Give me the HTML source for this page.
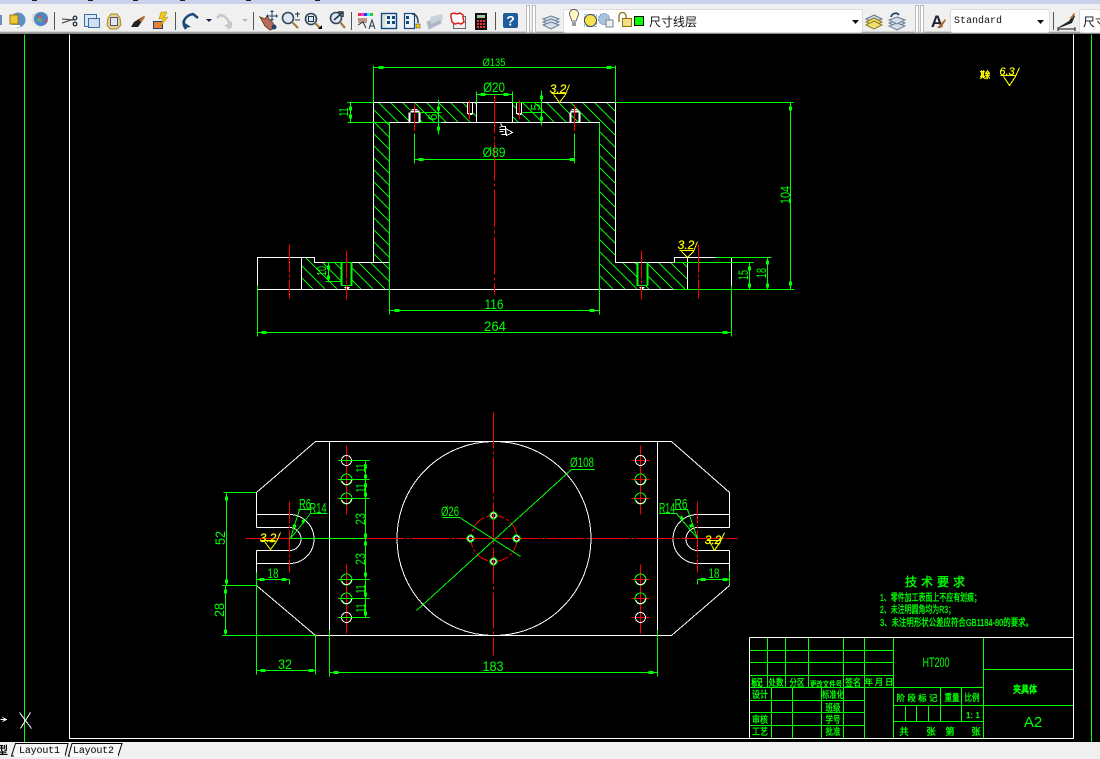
<!DOCTYPE html>
<html><head><meta charset="utf-8"><title>CAD</title>
<style>
html,body{margin:0;padding:0;background:#000;width:1100px;height:759px;overflow:hidden}
svg{display:block}
.t{font-family:"Liberation Sans","Noto Sans CJK SC",sans-serif;fill:#0f0;font-size:14px;text-anchor:middle}
.s{font-size:12.500px}
.c{font-family:"Liberation Sans","Noto Sans CJK SC",sans-serif;fill:#0f0;font-size:9.500px;text-anchor:middle;stroke:#0f0;stroke-width:.35}
.y{font-family:"Liberation Sans",sans-serif;fill:#ff0;font-size:12px;font-style:italic;text-anchor:middle;stroke:#ff0;stroke-width:.2}
</style></head><body>
<svg xmlns="http://www.w3.org/2000/svg" width="1100" height="759" viewBox="0 0 1100 759">
<defs>
<clipPath id="hc"><path d="M373 102H476V122H389V289H301V257H314V262H373Z M615 102H512V122H599V289H687V262H615Z"/></clipPath>
</defs>
<rect width="1100" height="759" fill="#000"/>

<!-- hatching -->
<g clip-path="url(#hc)">
<path shape-rendering="crispEdges" fill="none" stroke="#0e0" d="M114 102l187 187M126 102l187 187M138 102l187 187M150 102l187 187M162 102l187 187M174 102l187 187M186 102l187 187M198 102l187 187M210 102l187 187M222 102l187 187M234 102l187 187M246 102l187 187M258 102l187 187M270 102l187 187M282 102l187 187M294 102l187 187M306 102l187 187M318 102l187 187M330 102l187 187M342 102l187 187M354 102l187 187M366 102l187 187M378 102l187 187M390 102l187 187M402 102l187 187M414 102l187 187M426 102l187 187M438 102l187 187M450 102l187 187M462 102l187 187M474 102l187 187M486 102l187 187M498 102l187 187M510 102l187 187M522 102l187 187M534 102l187 187M546 102l187 187M558 102l187 187M570 102l187 187M582 102l187 187M594 102l187 187M606 102l187 187M618 102l187 187M630 102l187 187M642 102l187 187M654 102l187 187M666 102l187 187M678 102l187 187"/>
</g>
<path fill="#000" d="M409 110h11v12h-11zM342 262h10v23h-10zM637 262h10v23h-10zM467 102h6v12h-6zM516 102h6v12h-6z"/>

<g transform="translate(.5 .5)" shape-rendering="crispEdges" fill="none">
<!-- frame -->
<path stroke="#0f0" d="M24 34V742M1091 34V742"/>
<path stroke="#fff" d="M69 34V738H1073V34"/>

<!-- front section white -->
<path stroke="#fff" d="M373 102H615V262H674V257H715M731 257V285M389 122V262H373V102M389 122H599V262M373 262H314V257H257V289H674M301 257V289M687 257V289M476 102V122M512 102V122"/>
<path stroke="#fff" d="M373 102V262M615 102V262"/>
<!-- hole details -->
<path stroke="#fff" stroke-width="2" d="M409 122V112M419 122V112M410 111H419M570 122V112M579 122V112M570 111H579"/>
<path stroke="#fff" d="M467 102V113H472V102M516 102V113H521V102M468 114h4M517 114h4M411 109h6M571 109h6M343 285h7M344 287h5M345 288h3M638 285h7M639 287h5M640 288h3"/>
<!-- green in front -->
<path stroke="#0f0" d="M373 65V102M615 65V102M373 67H615M476 91V102M512 91V102M476 94H512M414 133V163M574 133V163M414 159H574M347 102H373M347 122H389M350 102V122M615 102H793M438 99V134M419 112H441M419 122H441M541 90V125M512 102H541M522 112H545M389 122V314M599 122V314M389 310H599M257 285V336M731 285V336M257 332H731M328 262V282M325 262H352M325 281H341M341 285H352M636 285H647M674 289H794M674 262H753M715 257H771M749 262V289M767 257V289M790 102V289"/>
<path stroke="#0f0" stroke-width="2" d="M341 262V285M351 262V285M637 262V285M647 262V285"/>
<path stroke="#0f0" stroke-width="3" d="M378 67h5M606 67h5M480 94h5M503 94h5M418 159h5M569 159h5M350 106v4M350 114v4M438 106v4M438 126v4M541 95v4M541 116v4M394 310h5M589 310h5M261 332h5M722 332h5M328 265v4M328 275v4M749 266v4M749 283v4M767 260v4M767 283v4M790 106v4M790 281v4"/>
<!-- red center lines -->
<g stroke="#f00">
<path stroke-dasharray="38 3 3 3" d="M494 95V294"/>
<path d="M414 104V131M574 104V131M469 100V119M519 100V119"/>
<path stroke-dasharray="28 2 3 2" d="M289 244V298M698 244V298M346 250V299M641 250V299"/>
</g>
<!-- cursor -->
<path stroke="#fff" d="M500 123l2 3h3v3h-4M499 129h6v5h-4M505 128l7 4-6 3zM501 126l-2 1M503 131h-4"/>

<!-- plan view white -->
<path stroke="#fff" d="M256 514V492L315 441H671L729 492V527H697M256 514H289M256 527H289M256 550H289M256 563H289M256 514V527M256 550V572M729 550V585M697 514H729M697 550H729M697 563H729M256 585L315 635H671L729 585M329 441V630"/>
<path stroke="#fff" d="M657 441V635M315 635H671"/>
<path stroke="#fff" d="M289 514A24.500 24.500 0 0 1 289 563M289 527A11.500 11.500 0 0 1 289 550M697 514A24.500 24.500 0 0 0 697 563M697 527A11.500 11.500 0 0 0 697 550"/>
<circle cx="493.500" cy="538" r="97" stroke="#fff"/>
<!-- red -->
<circle cx="493.500" cy="538" r="23" stroke="#f00" stroke-dasharray="14 2 3 2"/>
<g stroke="#f00">
<path stroke-dasharray="38 2 3 2" d="M366 538H737"/>
<path d="M245 538H289"/>
<path stroke-dasharray="36 3 3 3" d="M493 412V655"/>
<path stroke-dasharray="22 2 3 2" d="M289 501V572M697 501V572"/>
<path d="M346 445V514M346 564V633M640 445V514M640 564V633M337 460H355M337 479H355M337 498H355M337 579H355M337 598H355M337 617H355M631 460H649M631 479H649M631 498H649M631 579H649M631 598H649M631 617H649"/>
</g>
<!-- holes -->
<g stroke="#0f0">
<circle cx="346" cy="479" r="5.500"/><circle cx="346" cy="498" r="5.500"/><circle cx="346" cy="579" r="5.500"/><circle cx="346" cy="598" r="5.500"/>
<circle cx="640" cy="479" r="5.500"/><circle cx="640" cy="498" r="5.500"/><circle cx="640" cy="579" r="5.500"/><circle cx="640" cy="598" r="5.500"/>
</g>
<g stroke="#fff">
<circle cx="346" cy="460" r="5"/><circle cx="346" cy="617" r="5"/><circle cx="640" cy="460" r="5"/><circle cx="640" cy="617" r="5"/>
<circle cx="346" cy="479" r="5" stroke-dasharray="14 18"/><circle cx="346" cy="498" r="5" stroke-dasharray="14 18"/><circle cx="346" cy="579" r="5" stroke-dasharray="14 18"/><circle cx="346" cy="598" r="5" stroke-dasharray="14 18"/>
<circle cx="640" cy="479" r="5" stroke-dasharray="14 18"/><circle cx="640" cy="498" r="5" stroke-dasharray="14 18"/><circle cx="640" cy="579" r="5" stroke-dasharray="14 18"/><circle cx="640" cy="598" r="5" stroke-dasharray="14 18"/>
</g>
<g stroke="#0f0" fill="#000"><circle cx="493" cy="515" r="3.500"/><circle cx="470" cy="538" r="3.500"/><circle cx="516" cy="538" r="3.500"/><circle cx="493" cy="561" r="3.500"/></g>
<g stroke="#fff" fill="#000"><circle cx="493" cy="515" r="2.500"/><circle cx="470" cy="538" r="2.500"/><circle cx="516" cy="538" r="2.500"/><circle cx="493" cy="561" r="2.500"/></g>
<path stroke="#f00" d="M493 513v5M468 538h5M514 538h5M493 559v5"/>
<!-- plan green -->
<path stroke="#0f0" d="M289 538H366M223 492H256M226 492V585M222 585H256M225 585V635M222 635H315M256 572V674M315 635V674M256 670H315M329 630V676M657 630V676M329 672H657M256 579H289M289 579V584M697 579H729M697 579V584M729 570V584M338 460H369M338 479H369M338 498H369M338 579H369M338 598H369M338 617H369M365 460V617"/>
<path stroke="#0f0" d="M416 610L571 469H594M442 517H459L520 556M298 509H311M290 538L299 509M290 538L310 513H327M697 538L687 509H674M697 538L676 513H659"/>
<path stroke="#0f0" stroke-width="3" d="M226 496v4M226 579v4M225 589v4M225 629v4M260 670h5M308 670h5M333 672h5M648 672h5M259 579h5M281 579h5M700 579h5M722 579h5M365 464v4M365 474v4M365 483v4M365 492v4M365 533v4M365 541v4M365 572v4M365 592v4M365 611v4M293 524l2 3M304 519l-2 3M680 516l2 3M690 524l1 3"/>

<!-- yellow symbols -->
<path stroke="#ff0" d="M551 93H565M553 94L559 102L565 94L569 84M679 250H693M681 251L687 257L693 251L697 241M261 540H275M264 541L270 549L276 541L280 532M706 540H720M709 541L714 550L720 541L724 532M1000 75H1015M1003 76L1009 85L1015 76L1019 67"/>

<!-- title block -->
<path stroke="#0f0" d="M749 650H893M749 662H893M749 675H893M749 687H983M749 700H864M749 712H864M749 725H864M767 637V687M785 637V687M808 637V687M843 637V738M864 637V738M893 637V738M983 637V738M771 687V738M792 687V738M821 687V738M940 687V721M961 687V721M905 705V721M916 705V721M928 705V721M893 705H983M893 721H983M983 669H1073M983 705H1073"/>
<path stroke="#fff" d="M749 637H1073V738M749 637V738"/>
<!-- UCS -->
<path stroke="#fff" d="M19 712L31 728M30 712L20 728M0 719h6M2 717l4 2-4 2"/>
</g>

<!-- dim text -->
<text class="t" x="494" y="66" textLength="23" lengthAdjust="spacingAndGlyphs" style="font-size:11px">Ø135</text>
<text class="t" x="494" y="92" textLength="22" lengthAdjust="spacingAndGlyphs">Ø20</text>
<text class="t" x="494" y="157" textLength="23" lengthAdjust="spacingAndGlyphs">Ø89</text>
<text class="t s" transform="rotate(-90 348 112)" x="348" y="112" textLength="9" lengthAdjust="spacingAndGlyphs">11</text>
<text class="t s" transform="rotate(-90 437 117)" x="437" y="117">6</text>
<text class="t s" transform="rotate(-90 540 107)" x="540" y="107">5</text>
<text class="t s" transform="rotate(-90 326 271)" x="326" y="271" textLength="10" lengthAdjust="spacingAndGlyphs">10</text>
<text class="t" x="494" y="309" textLength="19" lengthAdjust="spacingAndGlyphs">116</text>
<text class="t" x="495" y="331" textLength="22" lengthAdjust="spacingAndGlyphs">264</text>
<text class="t" transform="rotate(-90 748 275)" x="748" y="275" textLength="10" lengthAdjust="spacingAndGlyphs">15</text>
<text class="t" transform="rotate(-90 766 273)" x="766" y="273" textLength="10" lengthAdjust="spacingAndGlyphs">18</text>
<text class="t" transform="rotate(-90 790 195)" x="790" y="195" textLength="18" lengthAdjust="spacingAndGlyphs">104</text>

<text class="t" transform="rotate(-90 225 538)" x="225" y="538" textLength="14" lengthAdjust="spacingAndGlyphs">52</text>
<text class="t" transform="rotate(-90 224 610)" x="224" y="610" textLength="14" lengthAdjust="spacingAndGlyphs">28</text>
<text class="t" x="285" y="669" textLength="14" lengthAdjust="spacingAndGlyphs">32</text>
<text class="t" x="493" y="671" textLength="21" lengthAdjust="spacingAndGlyphs">183</text>
<text class="t" x="273" y="578" textLength="11" lengthAdjust="spacingAndGlyphs">18</text>
<text class="t" x="714" y="578" textLength="11" lengthAdjust="spacingAndGlyphs">18</text>
<text class="t" x="305" y="509" textLength="12" lengthAdjust="spacingAndGlyphs" style="font-size:15px">R6</text>
<text class="t" x="318" y="513" textLength="17" lengthAdjust="spacingAndGlyphs" style="font-size:15px">R14</text>
<text class="t" x="667" y="513" textLength="16" lengthAdjust="spacingAndGlyphs" style="font-size:15px">R14</text>
<text class="t" x="681" y="509" textLength="13" lengthAdjust="spacingAndGlyphs" style="font-size:15px">R6</text>
<text class="t" x="582" y="467" textLength="24" lengthAdjust="spacingAndGlyphs">Ø108</text>
<text class="t" x="450" y="516" textLength="18" lengthAdjust="spacingAndGlyphs">Ø26</text>
<text class="t s" transform="rotate(-90 365 468)" x="365" y="468" textLength="9" lengthAdjust="spacingAndGlyphs">11</text>
<text class="t s" transform="rotate(-90 365 488)" x="365" y="488" textLength="9" lengthAdjust="spacingAndGlyphs">11</text>
<text class="t" transform="rotate(-90 365 519)" x="365" y="519" textLength="12" lengthAdjust="spacingAndGlyphs">23</text>
<text class="t" transform="rotate(-90 365 559)" x="365" y="559" textLength="12" lengthAdjust="spacingAndGlyphs">23</text>
<text class="t s" transform="rotate(-90 365 589)" x="365" y="589" textLength="9" lengthAdjust="spacingAndGlyphs">11</text>
<text class="t s" transform="rotate(-90 365 608)" x="365" y="608" textLength="9" lengthAdjust="spacingAndGlyphs">11</text>

<!-- yellow text -->
<text class="y" x="558" y="93">3.2</text>
<text class="y" x="686" y="249">3.2</text>
<text class="y" x="268" y="542">3.2</text>
<text class="y" x="713" y="544">3.2</text>
<text class="y" x="1007" y="75" style="font-size:11px">6.3</text>
<text class="y" x="985" y="78" textLength="10" lengthAdjust="spacingAndGlyphs" style="font-family:'Liberation Sans','Noto Sans CJK SC',sans-serif;font-style:normal;font-size:9px;stroke-width:.7">其余</text>

<!-- tech requirements -->
<text class="c" x="937" y="586" style="font-size:12px;stroke-width:.4;letter-spacing:4px">技术要求</text>
<text class="c" x="880" y="601" style="text-anchor:start;font-size:10px" textLength="101" lengthAdjust="spacingAndGlyphs">1、零件加工表面上不应有划痕；</text>
<text class="c" x="880" y="613" style="text-anchor:start;font-size:10px" textLength="75" lengthAdjust="spacingAndGlyphs">2、未注明圆角均为R3；</text>
<text class="c" x="880" y="626" style="text-anchor:start;font-size:10px" textLength="153" lengthAdjust="spacingAndGlyphs">3、未注明形状公差应符合GB1184-80的要求。</text>

<!-- title text -->
<text class="c" x="757" y="686" textLength="11" lengthAdjust="spacingAndGlyphs" style="stroke-width:.7">标记</text>
<text class="c" x="776" y="686" textLength="15" lengthAdjust="spacingAndGlyphs">处数</text>
<text class="c" x="797" y="686" textLength="15" lengthAdjust="spacingAndGlyphs">分区</text>
<text class="c" x="826" y="687" textLength="32" lengthAdjust="spacingAndGlyphs" style="font-size:8px">更改文件号</text>
<text class="c" x="853" y="686" textLength="16" lengthAdjust="spacingAndGlyphs">签名</text>
<text class="c" x="879" y="685" textLength="29" style="font-size:8.500px">年月日</text>
<text class="c" x="760" y="698" textLength="16" lengthAdjust="spacingAndGlyphs">设计</text>
<text class="c" x="833" y="698" textLength="22" lengthAdjust="spacingAndGlyphs">标准化</text>
<text class="c" x="833" y="711" textLength="15" lengthAdjust="spacingAndGlyphs">班级</text>
<text class="c" x="760" y="723" textLength="16" lengthAdjust="spacingAndGlyphs">审核</text>
<text class="c" x="833" y="723" textLength="15" lengthAdjust="spacingAndGlyphs">学号</text>
<text class="c" x="760" y="735" textLength="16" lengthAdjust="spacingAndGlyphs">工艺</text>
<text class="c" x="833" y="735" textLength="15" lengthAdjust="spacingAndGlyphs">批准</text>
<text class="c" x="917" y="701" textLength="41" style="font-size:8.500px">阶段标记</text>
<text class="c" x="952" y="701" textLength="15" lengthAdjust="spacingAndGlyphs">重量</text>
<text class="c" x="972" y="701" textLength="15" lengthAdjust="spacingAndGlyphs">比例</text>
<text class="c" x="973" y="718" textLength="14" style="font-size:8px">1: 1</text>
<text class="c" x="904" y="735">共</text><text class="c" x="931" y="735">张</text><text class="c" x="950" y="735">第</text><text class="c" x="976" y="735">张</text>
<text class="t" x="936" y="667" textLength="27" lengthAdjust="spacingAndGlyphs">HT200</text>
<text class="c" x="1025" y="693" textLength="24" lengthAdjust="spacingAndGlyphs" style="font-size:10px;stroke-width:.7">夹具体</text>
<text class="t" x="1033" y="727" style="font-size:15px">A2</text>

<!-- toolbar -->
<rect x="0" y="0" width="1100" height="34" fill="#f0f0f0"/>
<rect x="0" y="0" width="1100" height="4" fill="#c9d2ea"/>
<path d="M32 0h5v1h-5zM88 0h5v1h-5zM133 0h5v1h-5zM180 0h5v1h-5zM246 0h5v1h-5zM315 0h5v1h-5z" fill="#222"/>
<rect x="0" y="31.500" width="1100" height="1" fill="#bbb"/><rect x="0" y="32.500" width="1100" height="1.500" fill="#8a8a8a"/>
<g fill="#555"><rect x="54" y="12" width="1" height="18"/><rect x="175" y="12" width="1" height="18"/><rect x="253" y="12" width="1" height="18"/><rect x="351" y="12" width="1" height="18"/><rect x="495" y="12" width="1" height="18"/><rect x="1053" y="12" width="1" height="18"/></g>
<g fill="#fff" stroke="#bbb"><rect x="526.500" y="5.500" width="3" height="27"/><rect x="532.500" y="5.500" width="3" height="27"/><rect x="915.500" y="5.500" width="3" height="27"/><rect x="920.500" y="5.500" width="3" height="27"/></g>
<!-- icons -->
<rect x="0" y="15" width="2" height="10" fill="#6a8cb5"/>
<circle cx="18" cy="20" r="7.500" fill="#5f90c5"/><rect x="10" y="15" width="8" height="9" fill="#f0c830" stroke="#a07810"/><rect x="12" y="25" width="8" height="2" fill="#fff"/>
<path d="M32 22l8 6 8-6V14l-8-2-8 2z" fill="#ddd"/><circle cx="41" cy="19" r="7" fill="#4a86c5"/><path d="M37 15l5 1-2 5zM44 21l3-3v5z" fill="#d45"/><path d="M36 21l4-5 3 6z" fill="#6b5" opacity=".7"/>
<g fill="none" stroke="#555" stroke-width="1.300"><path d="M62 19l12 1M62 23l12-4"/><circle cx="75" cy="18" r="1.800" stroke="#234"/><circle cx="75" cy="24" r="1.800" stroke="#234"/></g>
<rect x="84.500" y="14.500" width="12" height="12" fill="#dce8f5" stroke="#3a6ea5"/><rect x="88.500" y="18.500" width="11" height="9" fill="#cfdff0" stroke="#3a6ea5"/>
<path d="M108 18l3-4h6l3 4 1 7-4 4h-7l-3-4z" fill="#e8d088" stroke="#a08838"/><rect x="110.500" y="17.500" width="7" height="8" fill="#dfe7f3" stroke="#557"/>
<path d="M131 27l3-5 10-6 1 1-7 10z" fill="#222"/><path d="M139 20l5-4 1 1-4 5z" fill="#c86a20"/>
<rect x="153.500" y="21.500" width="9" height="7" fill="#e8803a" stroke="#246"/><path d="M161 12l6 0-3 6 4-1-7 9 2-7h-4z" fill="#f0c820" stroke="#a08000" stroke-width=".5"/>
<path d="M186 29C180 21 187 15 193 14l5 4" fill="none" stroke="#1e4a7a" stroke-width="2.500"/><path d="M182 21l2 7 7-1z" fill="#1e4a7a"/>
<path d="M206 19h6l-3 3z" fill="#124"/>
<path d="M228 29c4-7-2-13-8-14l-3 3" fill="none" stroke="#c8c8c8" stroke-width="2.500"/><path d="M224 26l8-5 0 7z" fill="#c8c8c8"/>
<path d="M242 19h6l-3 3z" fill="#bbb"/>
<path d="M260 17l5 2 2-3 3 4 3 3 2 5-5 2-5-4z" fill="#b86c60" stroke="#742"/><path d="M272 12v8M268 16h8" fill="none" stroke="#246"/><path d="M272 10l-2 2h4zM272 21l-2-2h4zM266 16l2-2v4zM278 16l-2-2v4z" fill="#246"/><circle cx="274" cy="27" r="2.500" fill="#246"/>
<g fill="#dce8f5" stroke="#345" stroke-width="1.600"><circle cx="288" cy="18" r="5.500"/><circle cx="311" cy="19" r="5.500"/><circle cx="336" cy="18" r="5.500"/></g>
<g stroke="#a08040" stroke-width="2.200"><path d="M292 22l6 6M315 23l5 5M340 22l5 6"/></g>
<path d="M295 14h5M297.500 12v5M295 20h5" stroke="#234" fill="none"/><rect x="308.500" y="16.500" width="5" height="5" fill="none" stroke="#234"/><path d="M318 29l4-4v4z" fill="#000"/><path d="M334 20l8-7M338 12h5v5" fill="none" stroke="#234" stroke-width="1.500"/>
<rect x="358" y="13" width="3" height="3" fill="#e33"/><rect x="361" y="13" width="3" height="3" fill="#e3e"/><rect x="364" y="13" width="3" height="3" fill="#33e"/><rect x="367" y="13" width="3" height="3" fill="#3ee"/><rect x="370" y="13" width="3" height="3" fill="#3c3"/>
<path d="M358 18h9v5h-9z" fill="#b98"/><path d="M358 25l5-3 3 6M369 29l3-9 3 9M370 26h4" fill="none" stroke="#234"/>
<rect x="381.500" y="13.500" width="15" height="15" fill="#e8f0f8" stroke="#124a80" stroke-width="1.400"/><path d="M387 16h3v3h-3zM392 16h3v3h-3zM387 21h3v3h-3zM392 21h3v3h-3z" fill="#124a80"/><path d="M384 15v12" stroke="#c8a020" stroke-dasharray="1 1"/>
<rect x="404.500" y="13.500" width="10" height="15" fill="#eef3f9" stroke="#124a80" stroke-width="1.200"/><path d="M406 16h3v3h-3zM406 21h3v3h-3z" fill="#124a80"/><path d="M412 14c4 0 6 3 6 9" fill="none" stroke="#345" stroke-width="1.500"/><rect x="416" y="24" width="4" height="4" fill="#fc0" stroke="#234" stroke-width=".5"/>
<path d="M427 22l14-6v7l-12 6z" fill="#aab6c2" stroke="#bbc"/><path d="M430 17l12-3 1 5-12 5z" fill="#c6d2dc"/>
<rect x="453.500" y="16.500" width="12" height="12" fill="#eee" stroke="#666"/><path d="M451 14l3-1 3 1 3-1 3 2 0 3 1 4-3 2-3-1-3 1-3-2-1-5z" fill="#fff" stroke="#d22" stroke-width="1.500"/>
<rect x="475" y="13" width="12" height="17" fill="#111"/><rect x="477" y="15" width="8" height="3" fill="#9c9"/><path d="M477 20h2v2h-2zM480 20h2v2h-2zM483 20h2v2h-2zM477 23h2v2h-2zM480 23h2v2h-2zM483 23h2v2h-2zM477 26h2v2h-2zM480 26h2v2h-2zM483 26h2v2h-2z" fill="#e33"/>
<rect x="503" y="13" width="15" height="15" rx="2" fill="#1f5c9a"/><text x="510.500" y="25.500" font-family="Liberation Sans,sans-serif" font-weight="bold" font-size="14" fill="#fff" text-anchor="middle">?</text>
<g fill="#d4dde8" stroke="#6a8098"><path d="M551 16l8 3-8 4-8-4z"/><path d="M551 19l8 3-8 4-8-4z"/><path d="M551 22l8 3-8 4-8-4z"/></g>

<rect x="563.500" y="9.500" width="299" height="23" rx="2" fill="#fff" stroke="#ddd"/>
<path d="M570 16a4.500 4.500 0 1 1 8 0l-2 5h-4z" fill="#fff8c0" stroke="#445" stroke-width=".8"/><rect x="572" y="22" width="4" height="4" fill="#99a"/>
<rect x="584.500" y="14.500" width="12" height="12" fill="none" stroke="#6fa0c0" stroke-dasharray="2 2"/><circle cx="590.500" cy="20.500" r="6" fill="#f5e050" stroke="#345"/>
<circle cx="604" cy="19" r="5.500" fill="#a8c4de" stroke="#78a" stroke-dasharray="2 1"/><path d="M606 20h7v7h-7z" fill="#eee" stroke="#789"/>
<path d="M619 22v-6a3.500 3.500 0 0 1 7 0v2" fill="none" stroke="#8a7010" stroke-width="1.300"/><rect x="622.500" y="18.500" width="9" height="8" fill="#f5e080" stroke="#8a7010"/>
<rect x="634.500" y="16.500" width="9" height="9" fill="#0f0" stroke="#000"/>
<text x="649" y="26" font-family="Liberation Sans,Noto Sans CJK SC,sans-serif" font-size="12" fill="#111">尺寸线层</text>
<path d="M852 20h7l-3.500 4z" fill="#111"/>
<g fill="#f0e070" stroke="#8a7a20"><path d="M874 15l8 4-8 4-8-4z" fill="#cdd8e2" stroke="#678"/><path d="M874 18l8 4-8 4-8-4z"/><path d="M874 21l8 4-8 4-8-4z"/></g>
<g fill="#d4dde8" stroke="#6a8098"><path d="M897 20l8 3-8 4-8-4z"/><path d="M897 23l8 3-8 4-8-4z"/><path d="M897 17l8 3-8 4-8-4z"/></g><path d="M891 17c1-4 6-5 8-2" fill="none" stroke="#246" stroke-width="1.800"/>
<text x="937" y="27" font-family="Liberation Sans,sans-serif" font-weight="bold" font-size="17" fill="#223" text-anchor="middle">A</text><path d="M937 28l8-9 1 1-5 8z" fill="#a86a30"/>
<rect x="950.500" y="9.500" width="99" height="23" rx="2" fill="#fff" stroke="#ddd"/>
<text x="954" y="23" font-family="Liberation Mono,monospace" font-size="10" fill="#111" textLength="48">Standard</text>
<path d="M1037 20h7l-3.500 4z" fill="#111"/>
<path d="M1059 27l10-6 4-6 2 1-3 7-13 5z" fill="#222"/><path d="M1070 18l4-5 1 1-3 5z" fill="#a86a30"/><path d="M1058 27v4M1075 27v4M1058 29h17" stroke="#111" fill="none"/>
<rect x="1079.500" y="9.500" width="30" height="23" rx="2" fill="#fff" stroke="#ddd"/>
<text x="1083" y="26" font-family="Liberation Sans,Noto Sans CJK SC,sans-serif" font-size="12" fill="#111">尺寸</text>

<!-- bottom tabs -->
<rect x="0" y="742" width="1100" height="17" fill="#f0f0f0"/>
<text x="-3" y="754" font-family="Liberation Sans,Noto Sans CJK SC,sans-serif" font-size="11" fill="#000" font-weight="bold">型</text>
<path d="M11.500 756L15.500 743.500H68L65 756Z" fill="#f6f6f6" stroke="#000"/>
<path d="M68.500 756L72 743.500H122L118 756Z" fill="#f6f6f6" stroke="#000"/>
<rect x="14" y="755" width="51" height="1.500" fill="#fff"/><rect x="70" y="755" width="48" height="1.500" fill="#fff"/>
<text x="19" y="753" font-family="Liberation Mono,monospace" font-size="10" fill="#000" textLength="41">Layout1</text>
<text x="73" y="753" font-family="Liberation Mono,monospace" font-size="10" fill="#000" textLength="41">Layout2</text>
</svg>
</body></html>
